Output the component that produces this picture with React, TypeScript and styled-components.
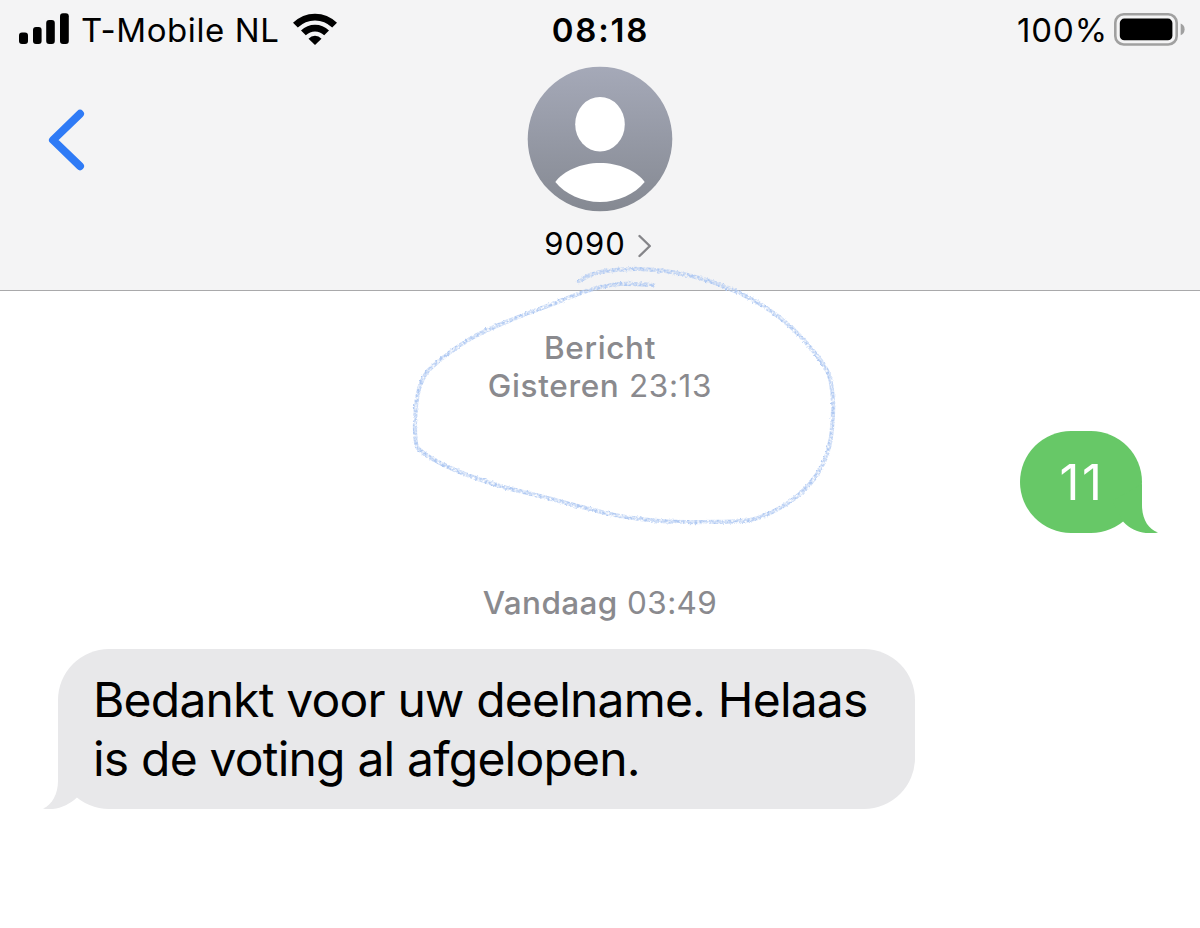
import styled, { createGlobalStyle } from "styled-components";

type Point = [number, number];

const strokePoints: Point[] = [
  [579, 282],
  [590, 275],
  [610, 270.5],
  [640, 269],
  [672, 272],
  [703, 279],
  [735, 291],
  [765, 307],
  [792, 328],
  [815, 353],
  [829, 375],
  [833, 402],
  [832, 428],
  [828, 451],
  [818, 473],
  [801, 493],
  [778, 509],
  [750, 520],
  [705, 522],
  [660, 521],
  [620, 516],
  [582, 507],
  [540, 496],
  [500, 486],
  [455, 470],
  [422, 452],
  [415.5, 438],
  [416.5, 402],
  [421.5, 382],
  [433, 366],
  [470, 339],
  [506, 322],
  [550, 305],
  [590, 290],
  [620, 284],
  [653, 285],
];

// catmull-rom to bezier, keeps the pen line smooth through every point
const toSmoothPath = (points: Point[]) =>
  points.slice(1).reduce((path, end, i) => {
    const start = points[i];
    const before = points[i - 1] ?? start;
    const after = points[i + 2] ?? end;
    const c1 = [
      start[0] + (end[0] - before[0]) / 6,
      start[1] + (end[1] - before[1]) / 6,
    ];
    const c2 = [
      end[0] - (after[0] - start[0]) / 6,
      end[1] - (after[1] - start[1]) / 6,
    ];
    return `${path} C${c1} ${c2} ${end}`;
  }, `M${points[0]}`);

const Signal = () => (
  <svg width="50" height="32" viewBox="0 0 50 32">
    <rect x="0" y="19.5" width="9" height="11.5" rx="3" />
    <rect x="14" y="14" width="8.6" height="17" rx="3" />
    <rect x="27.2" y="7" width="8.6" height="24" rx="3" />
    <rect x="41" y="0.3" width="8.8" height="30.7" rx="3" />
  </svg>
);

const Wifi = () => (
  <svg width="44" height="33" viewBox="0 0 44 33">
    <path d="M0 9.8Q9.4 0.7 22 0.7T44 9.8L39.2 14.5Q31.8 7.4 22 7.4T4.8 14.5Z" />
    <path d="M8 17.5Q14 11.8 22 11.8T36 17.5L31.2 22.3Q27.2 18.5 22 18.5T12.8 22.3Z" />
    <path d="M15.5 25.8Q18.2 22.8 22 22.8T28.5 25.8L22 32Z" />
  </svg>
);

const Battery = () => (
  <svg width="71" height="33" viewBox="0 0 71 33">
    <rect
      x="1.3"
      y="1.3"
      width="61.4"
      height="30.2"
      rx="8.5"
      fill="none"
      stroke="#a0a0a0"
      strokeWidth="2.6"
    />
    <rect x="5.8" y="5.6" width="52.6" height="21.6" rx="4.5" />
    <path d="M66.7 10.5Q70.6 12 70.6 16.3T66.7 22.3Z" fill="#a0a0a0" />
  </svg>
);

const Avatar = () => (
  <svg width="146" height="146" viewBox="0 0 146 146">
    <defs>
      <linearGradient id="avatarFill" x1="0" y1="0" x2="0" y2="1">
        <stop offset="0" stopColor="#a5a9b8" />
        <stop offset="1" stopColor="#858992" />
      </linearGradient>
    </defs>
    <circle cx="73" cy="73" r="72.3" fill="url(#avatarFill)" />
    <ellipse cx="73" cy="58.3" rx="24.8" ry="27.3" fill="#fff" />
    <path
      d="M28.3 116C36 105 54 97 73 97S110 105 117.7 116C108 128 91 136 73 136S38 128 28.3 116Z"
      fill="#fff"
    />
  </svg>
);

const PenStroke = () => (
  <StyledPenStroke viewBox="0 0 1200 928">
    <defs>
      <filter
        id="crayon"
        filterUnits="userSpaceOnUse"
        x="400"
        y="255"
        width="450"
        height="285"
        colorInterpolationFilters="sRGB"
      >
        <feTurbulence
          type="fractalNoise"
          baseFrequency="0.4"
          numOctaves="2"
          seed="4"
          result="noise"
        />
        <feColorMatrix
          in="noise"
          type="matrix"
          values="0 0 0 0 0  0 0 0 0 0  0 0 0 0 0  2 0 0 0 -0.4"
          result="grain"
        />
        <feDisplacementMap
          in="SourceGraphic"
          in2="noise"
          scale="3"
          xChannelSelector="R"
          yChannelSelector="G"
          result="rough"
        />
        <feComposite in="rough" in2="grain" operator="in" />
      </filter>
    </defs>
    <path
      d={toSmoothPath(strokePoints)}
      fill="none"
      stroke="#b0c9f2"
      strokeWidth="4.2"
      strokeLinecap="round"
      filter="url(#crayon)"
    />
  </StyledPenStroke>
);

export default function App() {
  return (
    <>
      <GlobalStyle />
      <StyledScreen>
        <StyledHeader>
          <StyledStatusBar>
            <StyledStatusGroup $align="start">
              <Signal />
              <StyledCarrier>T-Mobile NL</StyledCarrier>
              <Wifi />
            </StyledStatusGroup>
            <StyledClock>08:18</StyledClock>
            <StyledStatusGroup $align="end">
              <StyledPercent>100%</StyledPercent>
              <Battery />
            </StyledStatusGroup>
          </StyledStatusBar>
          <StyledContactBar>
            <StyledBackButton aria-label="Terug">
              <svg width="40" height="66" viewBox="0 0 40 66">
                <path
                  d="M34 6.8L7 33L34 59.2"
                  fill="none"
                  stroke="#2f7bf6"
                  strokeWidth="8"
                  strokeLinecap="round"
                  strokeLinejoin="round"
                />
              </svg>
            </StyledBackButton>
            <StyledContact>
              <Avatar />
              <StyledContactName>
                9090
                <svg width="16" height="24" viewBox="0 0 16 24">
                  <path
                    d="M2.5 2L12.8 12L2.5 22"
                    fill="none"
                    stroke="#858589"
                    strokeWidth="2.4"
                    strokeLinecap="round"
                    strokeLinejoin="round"
                  />
                </svg>
              </StyledContactName>
            </StyledContact>
          </StyledContactBar>
        </StyledHeader>
        <StyledThread>
          <StyledTimestamp $spacing={0.65}>
            <strong>Bericht</strong>
            <span>
              <strong>Gisteren</strong> 23:13
            </span>
          </StyledTimestamp>
          <StyledSentBubble>
            11
            <StyledTail $side="right" viewBox="0 0 50 60">
              <path d="M34 11V32C34 46 40 56 50 59.6C37 62 24 58 15.5 49L4 28Z" />
            </StyledTail>
          </StyledSentBubble>
          <StyledTimestamp $spacing={0.4}>
            <span>
              <strong>Vandaag</strong> 03:49
            </span>
          </StyledTimestamp>
          <StyledReceivedBubble>
            Bedankt voor uw deelname. Helaas
            <br />
            is de voting al afgelopen.
            <StyledTail $side="left" viewBox="0 0 50 60">
              <path d="M15 0V32C15 45 9 56 0 59.6C12 62 25 57 34 48.5L46 28Z" />
            </StyledTail>
          </StyledReceivedBubble>
        </StyledThread>
        <PenStroke />
      </StyledScreen>
    </>
  );
}

const GlobalStyle = createGlobalStyle`
  * {
    box-sizing: border-box;
  }

  body {
    margin: 0;
    background: #fff;
  }
`;

const StyledScreen = styled.main`
  position: relative;
  display: flex;
  flex-direction: column;

  width: 1200px;
  height: 928px;
  overflow: hidden;

  background: #fff;
  color: #000;
  font-family: Inter, "Liberation Sans", sans-serif;
`;

const StyledHeader = styled.header`
  height: 291px;

  background: #f4f4f5;
  border-bottom: 1px solid #a9a9ab;
`;

const StyledStatusBar = styled.div`
  display: grid;
  grid-template-columns: 1fr auto 1fr;
  align-items: center;

  height: 60px;
  padding: 0 15px 0 19px;

  font-size: 33px;
  line-height: 40px;
  white-space: nowrap;
`;

const StyledStatusGroup = styled.div<{ $align: "start" | "end" }>`
  display: flex;
  align-items: center;
  justify-content: flex-${({ $align }) => $align};

  svg {
    margin-bottom: 2px;
  }
`;

const StyledCarrier = styled.span`
  margin: 0 14px 0 12px;

  letter-spacing: 0.6px;
`;

const StyledClock = styled.span`
  margin-right: 3px;

  font-weight: 600;
  letter-spacing: 1.8px;
`;

const StyledPercent = styled.span`
  margin-right: 6px;

  letter-spacing: 0.9px;
`;

const StyledContactBar = styled.div`
  display: grid;
  grid-template-columns: 1fr auto 1fr;

  padding: 6px 46px 0;
`;

const StyledBackButton = styled.button`
  justify-self: start;

  height: 66px;
  margin-top: 41px;
  padding: 0;

  background: none;
  border: none;
`;

const StyledContact = styled.div`
  display: flex;
  flex-direction: column;
  align-items: center;
`;

const StyledContactName = styled.div`
  display: flex;
  align-items: center;
  gap: 11px;

  margin: 12px 3px 0 0;

  font-size: 31px;
  line-height: 40px;
  letter-spacing: 1px;

  svg {
    margin-top: 4px;
  }
`;

const StyledThread = styled.section`
  display: flex;
  flex-direction: column;

  padding: 38px 58px 0;
`;

const StyledTimestamp = styled.div<{ $spacing: number }>`
  display: flex;
  flex-direction: column;
  align-items: center;

  color: #8a8a8e;
  font-size: 31.5px;
  line-height: 37.5px;
  letter-spacing: ${({ $spacing }) => $spacing}px;

  strong {
    font-weight: 500;
  }
`;

const StyledBubble = styled.div`
  position: relative;

  border-radius: 51px;

  font-size: 48px;
  line-height: 59px;
  white-space: nowrap;
`;

const StyledSentBubble = styled(StyledBubble)`
  align-self: flex-end;

  width: 122px;
  height: 102px;
  margin: 27px 0 51px;
  padding: 22px 0 0 2px;

  background: #67c867;
  color: #fff;
  fill: #67c867;
  font-size: 49px;
  letter-spacing: 2.5px;
  text-align: center;
`;

const StyledReceivedBubble = styled(StyledBubble)`
  width: 857px;
  height: 160px;
  margin-top: 27px;
  padding: 21px 35px;

  background: #e8e8ea;
  fill: #e8e8ea;
  letter-spacing: -0.8px;
`;

const StyledTail = styled.svg<{ $side: "left" | "right" }>`
  position: absolute;
  bottom: 0;
  ${({ $side }) => $side}: ${({ $side }) => ($side === "left" ? -15 : -16)}px;

  width: 50px;
  height: 60px;
`;

const StyledPenStroke = styled.svg`
  position: absolute;
  inset: 0;

  width: 1200px;
  height: 928px;

  pointer-events: none;
`;
